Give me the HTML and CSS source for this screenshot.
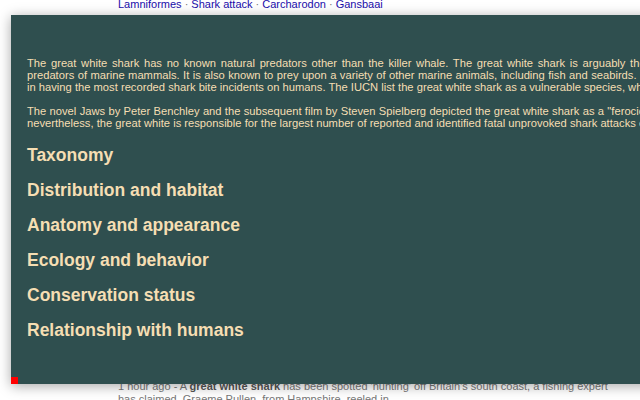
FILE: index.html
```html
<!DOCTYPE html>
<html>
<head>
<meta charset="utf-8">
<link rel="stylesheet" href="styles.css">
</head>
<body>
<div class="page">
  <div class="related">
    <a href="#">Lamniformes</a> · <a href="#">Shark attack</a> · <a href="#">Carcharodon</a> · <a href="#">Gansbaai</a>
  </div>
  <div class="snippet">
    1 hour ago - A <b>great white shark</b> has been spotted 'hunting' off Britain's south coast, a fishing expert<br>
    has claimed. Graeme Pullen, from Hampshire, reeled in ...
  </div>
</div>
<div class="overlay">
  <div class="intro">
    <p>The great white shark has no known natural predators other than the killer whale. The great white shark is arguably the world's largest known extant macropredatory fish, and is one of the primary predators of marine mammals. It is also known to prey upon a variety of other marine animals, including fish and seabirds. It is the only known surviving species of its genus Carcharodon, and ranked first in having the most recorded shark bite incidents on humans. The IUCN list the great white shark as a vulnerable species, while it is included in Appendix II of CITES.</p>
    <p>The novel Jaws by Peter Benchley and the subsequent film by Steven Spielberg depicted the great white shark as a "ferocious man eater". Humans are not the preferred prey of the great white shark, but, nevertheless, the great white is responsible for the largest number of reported and identified fatal unprovoked shark attacks on humans.</p>
  </div>
  <ul class="sections">
    <li>Taxonomy</li>
    <li>Distribution and habitat</li>
    <li>Anatomy and appearance</li>
    <li>Ecology and behavior</li>
    <li>Conservation status</li>
    <li>Relationship with humans</li>
  </ul>
  <span class="marker"></span>
</div>
</body>
</html>
```
FILE: styles.css
```css
html, body {
  margin: 0;
  padding: 0;
  background: #fff;
  overflow: hidden;
  width: 640px;
  height: 400px;
}
body {
  font-family: "Liberation Sans", Arial, sans-serif;
  position: relative;
}
.page {
  padding-left: 118px;
  display: flex;
  flex-direction: column;
}
.related {
  font-size: 11px;
  line-height: 14px;
  margin-top: -3px;
  color: #777;
}
.related a {
  color: #1a0dab;
  text-decoration: none;
}
.snippet {
  margin-top: 369px;
  font-size: 11px;
  line-height: 13px;
  color: #777;
}
.snippet b {
  color: #555;
}
.overlay {
  position: absolute;
  left: 11px;
  top: 15px;
  width: 1044px;
  height: 369px;
  box-sizing: border-box;
  padding: 42px 16px 0 16px;
  background: #2f4f4f;
  color: #f5deb3;
  box-shadow: 0 2px 12px rgba(0, 0, 0, 0.35);
  display: flex;
  flex-direction: column;
}
.intro {
  display: flex;
  flex-direction: column;
  gap: 11px;
}
.intro p {
  margin: 0;
  font-size: 11.2px;
  line-height: 12.2px;
  text-align: justify;
}
.sections {
  list-style: none;
  margin: 16px 0 0 0;
  padding: 0;
  display: flex;
  flex-direction: column;
  gap: 15px;
}
.sections li {
  font-size: 17.5px;
  font-weight: bold;
  line-height: 20px;
}
.marker {
  position: absolute;
  left: 0;
  bottom: 0;
  width: 7px;
  height: 7px;
  background: #f00;
}
```
